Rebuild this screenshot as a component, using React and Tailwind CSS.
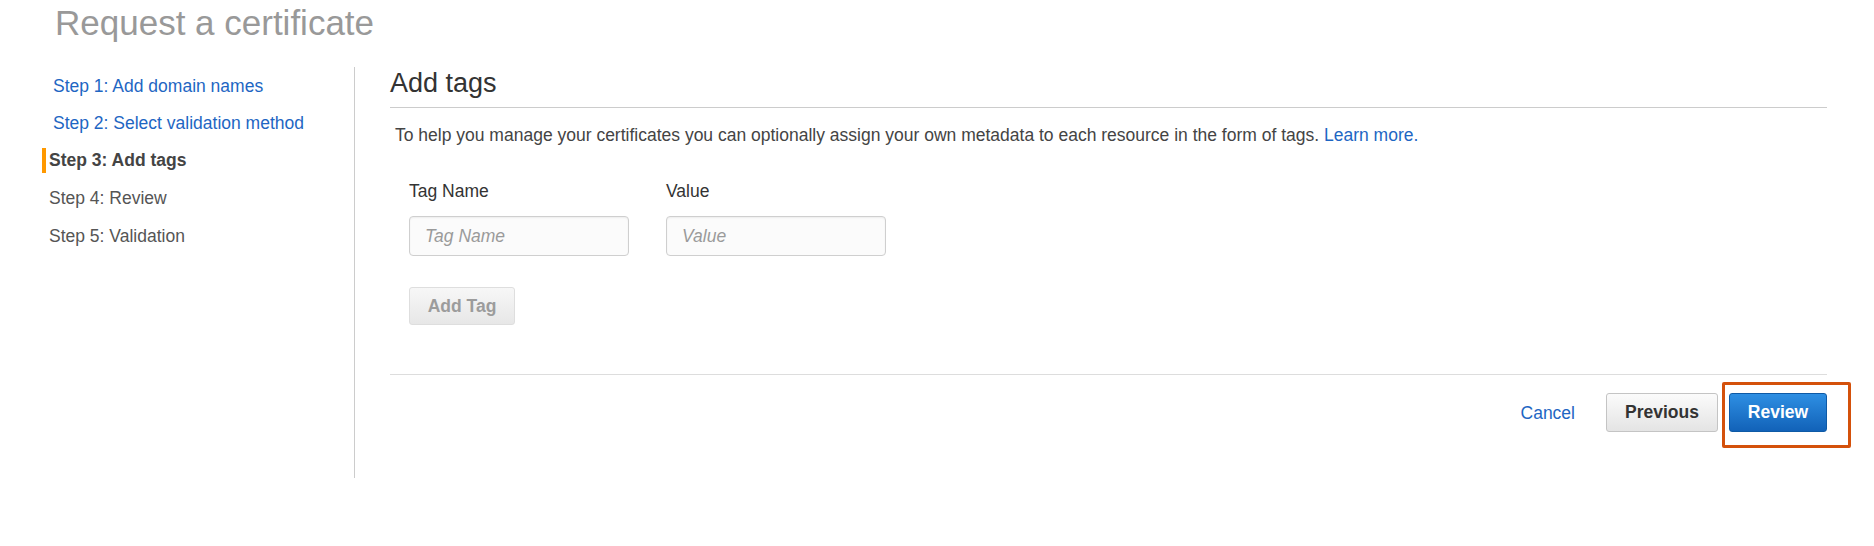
const steps = [
  { label: "Step 1: Add domain names", state: "link" },
  { label: "Step 2: Select validation method", state: "link" },
  { label: "Step 3: Add tags", state: "active" },
  { label: "Step 4: Review", state: "todo" },
  { label: "Step 5: Validation", state: "todo" },
];

const StepNav = () => (
  <nav className="w-[354px] shrink-0 pl-[42px]">
    {steps.map((s) => (
      <div key={s.label} className="h-[37.5px] flex items-center">
        {s.state === "link" && (
          <a className="pl-[11px] text-[#1e66c3] leading-[24px]">{s.label}</a>
        )}
        {s.state === "active" && (
          <span className="border-l-4 border-[#ff9900] pl-[3px] leading-[25px] font-bold text-[#444]">
            {s.label}
          </span>
        )}
        {s.state === "todo" && (
          <span className="pl-[7px] text-[#555] leading-[24px]">{s.label}</span>
        )}
      </div>
    ))}
  </nav>
);

const Field = ({ label }) => (
  <div className="w-[220px]">
    <div className="leading-[24px] text-[#333]">{label}</div>
    <input
      placeholder={label}
      className="mt-[13px] w-[220px] h-[40px] rounded-[4px] border border-[#cfcfcf] bg-[#fbfbfb] px-[15px] italic text-[#333] placeholder:text-[#9a9a9a] shadow-[inset_0_1px_2px_rgba(0,0,0,0.06)] outline-none"
    />
  </div>
);

export default function App() {
  return (
    <div className="w-[1874px] h-[546px] bg-white font-['Liberation_Sans',Arial,sans-serif] text-[17.5px] overflow-hidden">
      <h1 className="pl-[55px] pt-[3px] text-[35px] leading-[40px] text-[#999]">
        Request a certificate
      </h1>

      <div className="mt-[24px] flex h-[411px]">
        <StepNav />

        <main className="flex-1 border-l border-[#cccccc] pl-[35px] pr-[47px]">
          <h2 className="text-[27px] leading-[32px] text-[#333] pb-[8px] border-b border-[#cccccc]">
            Add tags
          </h2>

          <p className="mt-[15px] pl-[5px] leading-[24px] text-[#444]">
            To help you manage your certificates you can optionally assign your own metadata to each resource in
            the form of tags. <a className="text-[#1e66c3]">Learn more.</a>
          </p>

          <div className="pl-[19px]">
            <div className="mt-[32px] flex gap-[37px]">
              <Field label="Tag Name" />
              <Field label="Value" />
            </div>

            <button className="mt-[31px] w-[106px] h-[38px] rounded-[3px] border border-[#dedede] bg-gradient-to-b from-[#f7f7f7] to-[#e7e7e7] font-bold text-[#9c9c9c]">
              Add Tag
            </button>
          </div>

          <div className="mt-[49px] border-t border-[#dddddd]" />

          <div className="mt-[18px] flex items-center justify-end">
            <a className="text-[#1e66c3] leading-[24px]">Cancel</a>
            <button className="ml-[31px] w-[112px] h-[39px] rounded-[3px] border border-[#c4c4c4] bg-gradient-to-b from-[#fbfbfb] to-[#e4e4e4] font-bold text-[#333]">
              Previous
            </button>
            <div className="relative ml-[11px]">
              <button className="w-[98px] h-[39px] rounded-[3px] border border-[#0e5aa6] bg-gradient-to-b from-[#2e8fe3] to-[#1262b8] font-bold text-white">
                Review
              </button>
              <div className="absolute left-[-7px] top-[-11px] w-[129px] h-[66px] border-[3px] border-[#d4510b] rounded-[2px] pointer-events-none" />
            </div>
          </div>
        </main>
      </div>
    </div>
  );
}
